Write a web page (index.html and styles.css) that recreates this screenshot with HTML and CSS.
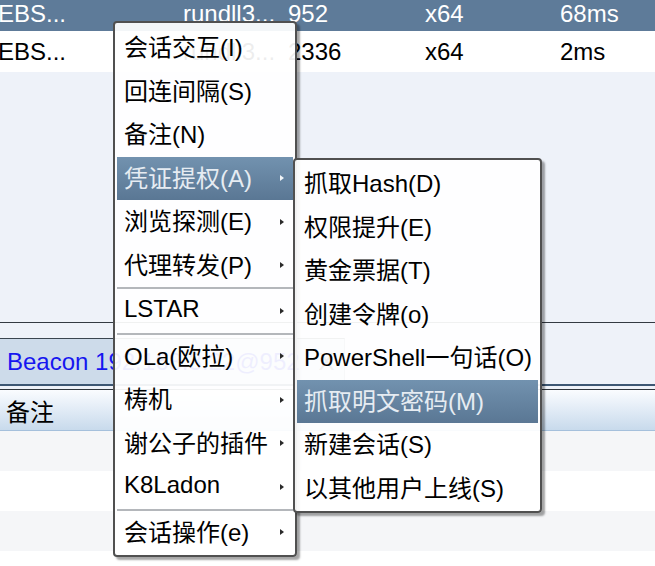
FILE: index.html
```html
<!DOCTYPE html>
<html lang="zh-CN">

<head>
    <meta charset="UTF-8">
    <meta name="viewport" content="width=device-width, initial-scale=1.0">
    <title>会话菜单</title>
    <link rel="stylesheet" href="styles.css">
</head>

<body>

    <!-- Session list -->
    <div class="sessions">
        <div class="row selected">
            <span class="first">EBS...</span><span>rundll3...</span><span>952</span><span>x64</span><span>68ms</span>
        </div>
        <div class="row">
            <span class="first">EBS...</span><span>rundll3...</span><span>2336</span><span>x64</span><span>2ms</span>
        </div>
    </div>
    <div class="blank"></div>

    <!-- Beacon tab -->
    <div class="tab-strip">
        <div class="tab">
            <span class="tab-title">Beacon 192.168.3.22@952</span>
            <span class="tab-close">X</span>
        </div>
    </div>
    <div class="tab-rule"></div>

    <div class="notes">
        <div class="notes-head">备注</div>
        <div class="notes-row alt"></div>
        <div class="notes-row"></div>
        <div class="notes-row alt"></div>
        <div class="notes-row"></div>
    </div>

    <!-- Context menu -->
    <div class="menu main-menu">
        <div class="item">会话交互(I)</div>
        <div class="item">回连间隔(S)</div>
        <div class="item">备注(N)</div>
        <div class="item active">凭证提权(A)<i class="arrow"></i></div>
        <div class="item">浏览探测(E)<i class="arrow"></i></div>
        <div class="item">代理转发(P)<i class="arrow"></i></div>
        <div class="sep"></div>
        <div class="item">LSTAR<i class="arrow"></i></div>
        <div class="sep"></div>
        <div class="item">OLa(欧拉)<i class="arrow"></i></div>
        <div class="item">梼机<i class="arrow"></i></div>
        <div class="item">谢公子的插件<i class="arrow"></i></div>
        <div class="item">K8Ladon<i class="arrow"></i></div>
        <div class="sep"></div>
        <div class="item">会话操作(e)<i class="arrow"></i></div>
    </div>

    <!-- Submenu of 凭证提权 -->
    <div class="menu sub-menu">
        <div class="item">抓取Hash(D)</div>
        <div class="item">权限提升(E)</div>
        <div class="item">黄金票据(T)</div>
        <div class="item">创建令牌(o)</div>
        <div class="item">PowerShell一句话(O)</div>
        <div class="item active">抓取明文密码(M)</div>
        <div class="item">新建会话(S)</div>
        <div class="item">以其他用户上线(S)</div>
    </div>

</body>

</html>
```

FILE: styles.css
```css
* {
    box-sizing: border-box;
    margin: 0;
    padding: 0;
}

body {
    position: relative;
    width: 655px;
    height: 566px;
    overflow: hidden;
    background-color: #ffffff;
    color: #000;
    font-family: "Liberation Sans", "Noto Sans CJK SC", sans-serif;
    font-size: 24px;
}

/* Session table */
.row {
    display: grid;
    grid-template-columns: 183px 105px 137px 135px 1fr;
    align-items: center;
    height: 41px;
    background-color: #ffffff;
    white-space: nowrap;
}

.row.selected {
    height: 31px;
    padding-bottom: 3px;
    background-color: #5e7b99;
    color: #ffffff;
}

.row .first {
    margin-left: -2px;
}

.blank {
    height: 250px;
    background-color: #eef2f9;
}

/* Tabs */
.tab-strip {
    display: flex;
    align-items: flex-end;
    height: 62px;
    border-top: 1px solid #333a42;
    background-color: #eef2f9;
}

.tab {
    display: flex;
    align-items: center;
    width: 345px;
    height: 46px;
    padding-left: 7px;
    border-top: 1px solid #3a4550;
    border-right: 1px solid #8a9aab;
    background-color: #cddbea;
    color: #1616f0;
    white-space: nowrap;
}

.tab-close {
    margin-left: 19px;
    color: #333;
}

.tab-rule {
    height: 6px;
    border-top: 2px solid #3d5773;
    border-bottom: 1px solid #30363c;
    background-color: #eef2f9;
}

/* Notes table */
.notes-head {
    display: flex;
    align-items: center;
    height: 41px;
    padding-left: 6px;
    border-bottom: 1px solid #a5c0dc;
    background: linear-gradient(#fafcff, #c8daec);
}

.notes-row {
    height: 40px;
    background-color: #ffffff;
}

.notes-row.alt {
    background-color: #f5f6f8;
}

/* Popup menus */
.menu {
    position: absolute;
    padding: 3px 2px 1px;
    border: 2px solid #505050;
    border-radius: 4px;
    background-color: rgba(255, 255, 255, 0.93);
    box-shadow: 3px 3px 2px rgba(0, 0, 0, 0.35);
}

.main-menu {
    left: 113px;
    top: 21px;
    width: 184px;
}

.sub-menu {
    left: 293px;
    top: 158px;
    width: 249px;
    padding-top: 2px;
}

.item {
    display: flex;
    align-items: center;
    justify-content: space-between;
    height: 43.5px;
    padding: 0 9px 4px 7px;
    white-space: nowrap;
}

.item.active {
    background: linear-gradient(#7292af, #5a7794);
    color: #e6ecf2;
}

.arrow {
    width: 0;
    height: 0;
    margin-top: 4px;
    border-left: 4px solid #2a2a2a;
    border-top: 3.5px solid transparent;
    border-bottom: 3.5px solid transparent;
}

.item.active .arrow {
    border-left-color: #f2f5f8;
}

.sep {
    height: 2px;
    background-color: #b4b7bb;
}
```
